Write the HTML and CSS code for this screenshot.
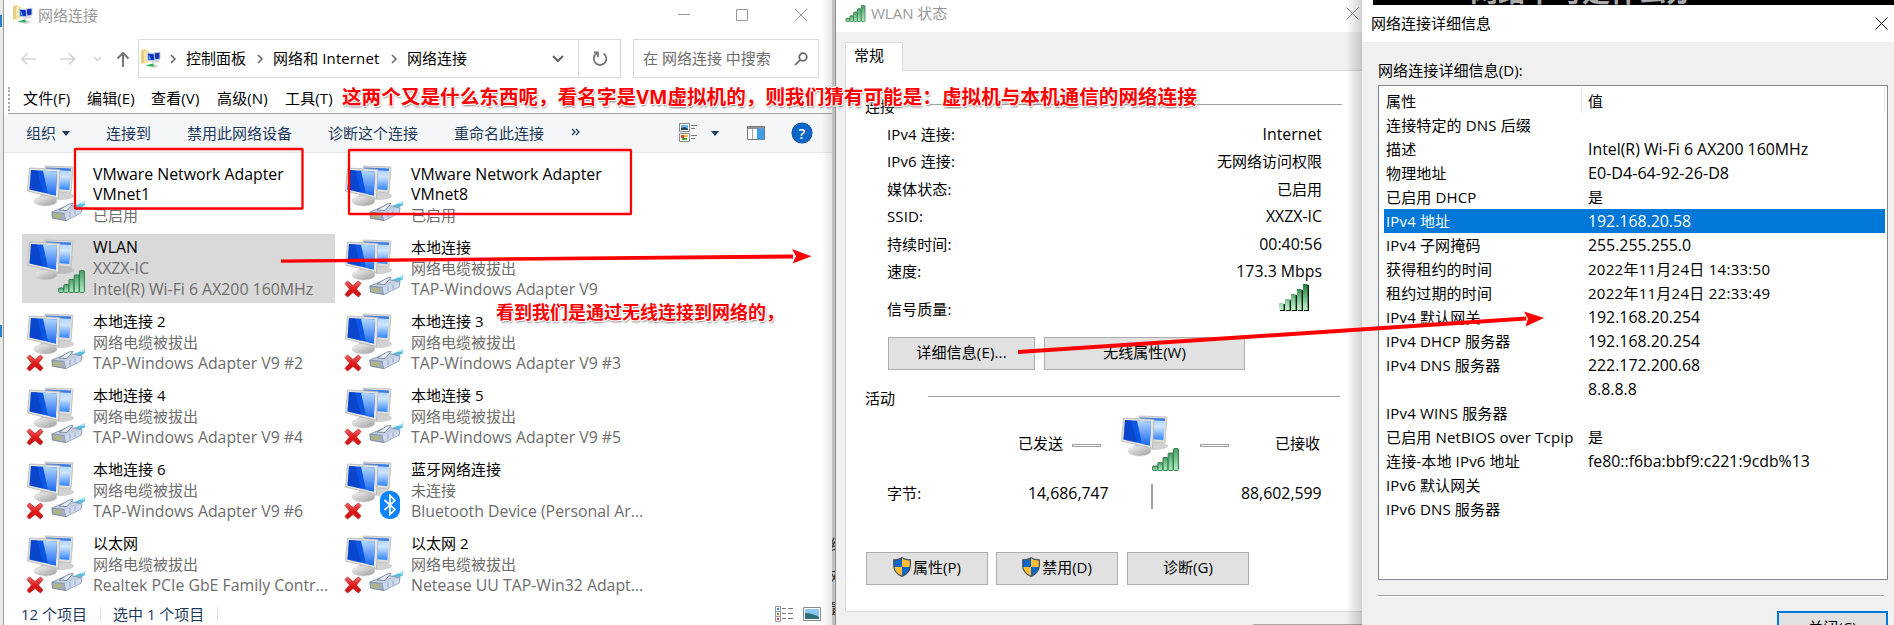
FILE: index.html
```html
<!DOCTYPE html>
<html lang="zh-CN">
<head>
<meta charset="utf-8">
<title>网络连接</title>
<link rel="stylesheet" href="styles.css">
</head>
<body>
<svg class="defs" width="0" height="0">
  <defs>
    <linearGradient id="g-back" x1="0" y1="0" x2="0" y2="1"><stop offset="0" stop-color="#a8d0ff"/><stop offset=".4" stop-color="#cfe6ff"/><stop offset="1" stop-color="#2c84ff"/></linearGradient>
    <linearGradient id="g-shine" x1="0" y1="0" x2="0" y2="1"><stop offset="0" stop-color="#b4d6ff"/><stop offset="1" stop-color="#1868f0"/></linearGradient>
    <linearGradient id="g-base" x1="0" y1="0" x2="1" y2="1"><stop offset="0" stop-color="#f6f6f6"/><stop offset="1" stop-color="#9a9a9a"/></linearGradient>
    <linearGradient id="g-bar" x1="0" y1="0" x2="0" y2="1"><stop offset="0" stop-color="#4d9e68"/><stop offset="1" stop-color="#b5ecc4"/></linearGradient>
    <linearGradient id="g-bar2" x1="0" y1="0" x2="0" y2="1"><stop offset="0" stop-color="#1c7838"/><stop offset="1" stop-color="#c4f5d0"/></linearGradient>
    <linearGradient id="g-x" x1="0" y1="0" x2="0" y2="1"><stop offset="0" stop-color="#f26a6a"/><stop offset=".5" stop-color="#dd1c1c"/><stop offset="1" stop-color="#c81010"/></linearGradient>
    <symbol id="pc" viewBox="0 0 50 50">
      <ellipse cx="33" cy="33" rx="14" ry="4" fill="#999" opacity=".45"/>
      <path d="M18 3 L46 4 L44 30 L22 28Z" fill="#dcdcd8" stroke="#bbb" stroke-width=".8"/>
      <path d="M19.500 5 L44 6 L42.300 27 L30 26Z" fill="url(#g-back)"/>
      <path d="M19 4.500 L44 5.500 L43.800 8 L19 6.500Z" fill="#3a7ae6"/>
      <path d="M11 35 Q14 33 16 30 L27 32 L29 36 Z" fill="#c6c6c6"/>
      <ellipse cx="18.500" cy="38" rx="11.500" ry="5" fill="url(#g-base)" stroke="#d0d0d0" stroke-width=".6"/>
      <path d="M2.500 5 L33 6.500 L31.500 35.500 L.5 28Z" fill="#e4e4e0" stroke="#b4b4b4" stroke-width=".8"/>
      <path d="M4 7 L30 8.500 L28.800 32.500 L2.500 26.500Z" fill="#0b56e4"/>
      <path d="M16 7.700 L30 8.500 L28.800 32.500 L21 30.700Z" fill="url(#g-shine)"/>
      <path d="M4 7 L10 7.300 L16 29.600 L2.500 26.500Z" fill="#0a36b4" opacity=".5"/>
    </symbol>
    <symbol id="plug" viewBox="0 0 36 22">
      <path d="M23 6 L34 1.500 L34 5 L28 9Z" fill="#5cbcdf"/>
      <path d="M27 4 L35 .8 L33 4Z" fill="#a5e4f4"/>
      <path d="M1 12 L13 7 L20 5.500 L31 8 L30 13 L15 20.500 L1.500 18Z" fill="#c3cde0" stroke="#8693ab" stroke-width=".9"/>
      <path d="M1 12 L13.500 13.500 L15 20.500 L1.500 18Z" fill="#a4afbc" stroke="#7c899a" stroke-width=".8"/>
      <path d="M13.500 13.500 L30 8.500 L29.500 13 L15 20Z" fill="#ccd9ee"/>
      <path d="M8 10 L18 4 L22 3.500 L16 10.500Z" fill="#e9eef6" stroke="#73829a" stroke-width=".9"/>
      <path d="M19 12v5.500M24 10.500v4.500" stroke="#8fa0bb" stroke-width=".9"/>
      <path d="M3.500 14v3M6 14.300v3.400M8.500 14.600v3.600" stroke="#bdb94e" stroke-width="1.400"/>
    </symbol>
    <symbol id="signal" viewBox="0 0 27 23">
      <g fill="url(#g-bar)" stroke="#2c7a48" stroke-width="1"><rect x=".6" y="18" width="5" height="4.400" rx="1"/><rect x="5.800" y="14.500" width="5" height="7.900" rx="1"/><rect x="11" y="9.500" width="5" height="12.900" rx="1"/><rect x="16.200" y="5" width="5" height="17.400" rx="1"/><rect x="21.400" y=".6" width="5" height="21.800" rx="1"/></g>
    </symbol>
    <symbol id="signal2" viewBox="0 0 32 27">
      <g fill="#0b1a0e"><path d="M2 20h5v7H2zM8 16h5v11H8zM14 11h5v16h-5zM20 6h5v21h-5zM26 1h5v26h-5z"/></g>
      <g fill="url(#g-bar2)"><path d="M1 19h4.600v7H1zM7 15h4.600v11H7zM13 10h4.600v16H13zM19 5h4.600v21H19zM25 0h4.600v26H25z"/></g>
    </symbol>
    <symbol id="redx" viewBox="0 0 18 18">
      <path d="M3.500 1 L9 5.500 L14.500 1 L17 3.500 L12.500 9 L17 14 L14.500 17 L9 12.500 L3.500 17 L1 14.500 L5.500 9 L1 3.500Z" fill="url(#g-x)" stroke="#c42a2a" stroke-width=".8" stroke-linejoin="round"/>
    </symbol>
    <symbol id="bt" viewBox="0 0 20 28">
      <rect width="20" height="28" rx="9" fill="#0a84ff"/>
      <path d="M4.500 9 L15 18.500 L10 23.500 V4.500 L15 9.500 L4.500 19" fill="none" stroke="#fff" stroke-width="1.700"/>
    </symbol>
    <symbol id="net" viewBox="0 0 20 20">
      <path d="M0 1 L5 0 V13 L0 15Z" fill="#e6cf86"/><path d="M3 2 L8 1 V13 L3 15Z" fill="#f7e6a4"/>
      <path d="M13 4 L19 3 V10 L14 11Z" fill="#1434b8" stroke="#c9d2dc" stroke-width="1"/>
      <path d="M6.500 4 L13.500 5 V12 L6.500 11Z" fill="#1233c8" stroke="#b4cbe6" stroke-width="1"/><path d="M7.500 5 L10 10.500 L7.500 10Z" fill="#63b4f5"/>
      <path d="M9 12 L18 10.500 L18 13 L12 14Z" fill="#d3d8dc"/>
      <path d="M5 17 L12 14.500 L18 17 L13 19Z" fill="#ccd3d6"/><path d="M4 16.500 L12 14.500 L13 17.500Z" fill="#26b44a"/>
    </symbol>
    <symbol id="shield" viewBox="0 0 18 20">
      <path d="M9 .7 Q12 2.800 17.300 3 V9 Q17 16 9 19.400 Q1 16 .7 9 V3 Q6 2.800 9 .7Z" fill="#0a67c8"/>
      <path d="M9 .7 Q12 2.800 17.300 3 V10 H9Z M9 10 V19.400 Q1.500 16 .7 10Z" fill="#ffbd33"/>
      <path d="M9 .7 Q12 2.800 17.300 3 V9 Q17 16 9 19.400 Q1 16 .7 9 V3 Q6 2.800 9 .7Z" fill="none" stroke="#4b5560" stroke-width="1.300"/>
    </symbol>
  </defs>
</svg>

<main class="desktop">
  <div class="backdrop-edge"><i></i><i></i></div>
  <div class="backdrop-gap"><span>络</span><span>戏</span><span>置</span></div>
  <div class="backdrop-black"><span>网络下可是什么办</span></div>

  <section class="win explorer">
    <header class="ex-title">
      <svg class="i20"><use href="#net"/></svg><span>网络连接</span>
      <svg class="ctl" width="130" height="14" viewBox="0 0 130 14"><path d="M0 6.500h12M58.500 1.500h11v11h-11zM117 1l12 12M129 1l-12 12" fill="none" stroke="#999"/></svg>
    </header>
    <div class="ex-nav">
      <svg class="arrows" width="116" height="20" viewBox="0 0 116 20"><g fill="none" stroke-width="1.700"><path d="M15 10H1M6.500 4.500L1 10l5.500 5.500M39 10h14M48 4.500l5.500 5.500-5.500 5.500M73 8l3.500 3.500L80 8" stroke="#d3d3d3"/><path d="M102 18V4M96.500 9.500L102 4l5.500 5.500" stroke="#777" stroke-width="2"/></g></svg>
      <div class="address">
        <svg class="i20"><use href="#net"/></svg>
        <svg class="chev"><path d="M1 1l4 4-4 4"/></svg><span>控制面板</span>
        <svg class="chev"><path d="M1 1l4 4-4 4"/></svg><span class="inet">网络和 Internet</span>
        <svg class="chev"><path d="M1 1l4 4-4 4"/></svg><span>网络连接</span>
        <svg class="drop" width="12" height="8" viewBox="0 0 12 8"><path d="M1 1l5 5 5-5"/></svg>
        <b class="refresh"><svg width="16" height="16" viewBox="0 0 16 16"><path d="M5 2.200A6.300 6.300 0 1 0 11.500 2.400M2 1.500h4v4.500" fill="none" stroke="#777" stroke-width="1.800"/></svg></b>
      </div>
      <div class="search"><span>在 网络连接 中搜索</span><svg width="14" height="14" viewBox="0 0 14 14"><circle cx="9" cy="5" r="3.800"/><path d="M6 8L1 13"/></svg></div>
    </div>
    <nav class="ex-menu"><span>文件(F)</span><span>编辑(E)</span><span>查看(V)</span><span>高级(N)</span><span>工具(T)</span></nav>
    <div class="ex-tools">
      <span class="t1">组织<i class="tri"></i></span><span class="t2">连接到</span><span class="t3">禁用此网络设备</span><span class="t4">诊断这个连接</span><span class="t5">重命名此连接</span>
      <svg class="more" width="9" height="8" viewBox="0 0 9 8"><path d="M1 1l3 3-3 3M5 1l3 3-3 3" fill="none" stroke="#1e395b" stroke-width="1.300"/></svg>
      <svg class="view" width="18" height="20" viewBox="0 0 18 20"><path d="M.5.5h10v8H.5zM.5 10.500h10v8H.5z" fill="#fff" stroke="#888"/><path d="M2 2h7v5H2z" fill="#6fb4e8"/><path d="M2 5l4-1 3 2v1H2z" fill="#245"/><path d="M2 12h3v3H2z" fill="#d43"/><path d="M5 12h4v2H5z" fill="#fb3"/><path d="M3 15h5v2H3z" fill="#4a3"/><path d="M12 2.500h6M12 5.500h4M12 12.500h6M12 15.500h4" stroke="#777"/></svg>
      <i class="tri"></i>
      <svg class="pane" width="18" height="15" viewBox="0 0 18 15"><path d="M.5.5h17v13H.5z" fill="#fff" stroke="#777"/><path d="M1 1h16v2H1z" fill="#8a949c"/><path d="M10 2.500h7v11h-7z" fill="#3f9ee8"/><path d="M5.500 3v10" stroke="#aaa"/></svg>
      <b class="help">?</b>
    </div>
    <div class="grid">
      <article class="item two"><div class="ico"><svg class="pc"><use href="#pc"/></svg><svg class="plug"><use href="#plug"/></svg></div><div><h4 class="la">VMware Network Adapter<br>VMnet1</h4><p>已启用</p></div></article>
      <article class="item two"><div class="ico"><svg class="pc"><use href="#pc"/></svg><svg class="plug"><use href="#plug"/></svg></div><div><h4 class="la">VMware Network Adapter<br>VMnet8</h4><p>已启用</p></div></article>
      <article class="item sel"><div class="ico"><svg class="pc"><use href="#pc"/></svg><svg class="sig"><use href="#signal"/></svg></div><div><h4 class="la">WLAN</h4><p class="la">XXZX-IC</p><p class="la">Intel(R) Wi-Fi 6 AX200 160MHz</p></div></article>
      <article class="item"><div class="ico"><svg class="pc"><use href="#pc"/></svg><svg class="plug"><use href="#plug"/></svg><svg class="x"><use href="#redx"/></svg></div><div><h4>本地连接</h4><p>网络电缆被拔出</p><p class="la">TAP-Windows Adapter V9</p></div></article>
      <article class="item"><div class="ico"><svg class="pc"><use href="#pc"/></svg><svg class="plug"><use href="#plug"/></svg><svg class="x"><use href="#redx"/></svg></div><div><h4>本地连接 2</h4><p>网络电缆被拔出</p><p class="la">TAP-Windows Adapter V9 #2</p></div></article>
      <article class="item"><div class="ico"><svg class="pc"><use href="#pc"/></svg><svg class="plug"><use href="#plug"/></svg><svg class="x"><use href="#redx"/></svg></div><div><h4>本地连接 3</h4><p>网络电缆被拔出</p><p class="la">TAP-Windows Adapter V9 #3</p></div></article>
      <article class="item"><div class="ico"><svg class="pc"><use href="#pc"/></svg><svg class="plug"><use href="#plug"/></svg><svg class="x"><use href="#redx"/></svg></div><div><h4>本地连接 4</h4><p>网络电缆被拔出</p><p class="la">TAP-Windows Adapter V9 #4</p></div></article>
      <article class="item"><div class="ico"><svg class="pc"><use href="#pc"/></svg><svg class="plug"><use href="#plug"/></svg><svg class="x"><use href="#redx"/></svg></div><div><h4>本地连接 5</h4><p>网络电缆被拔出</p><p class="la">TAP-Windows Adapter V9 #5</p></div></article>
      <article class="item"><div class="ico"><svg class="pc"><use href="#pc"/></svg><svg class="plug"><use href="#plug"/></svg><svg class="x"><use href="#redx"/></svg></div><div><h4>本地连接 6</h4><p>网络电缆被拔出</p><p class="la">TAP-Windows Adapter V9 #6</p></div></article>
      <article class="item"><div class="ico"><svg class="pc"><use href="#pc"/></svg><svg class="bt"><use href="#bt"/></svg><svg class="x"><use href="#redx"/></svg></div><div><h4>蓝牙网络连接</h4><p>未连接</p><p class="la">Bluetooth Device (Personal Ar...</p></div></article>
      <article class="item"><div class="ico"><svg class="pc"><use href="#pc"/></svg><svg class="plug"><use href="#plug"/></svg><svg class="x"><use href="#redx"/></svg></div><div><h4>以太网</h4><p>网络电缆被拔出</p><p class="la">Realtek PCIe GbE Family Contr...</p></div></article>
      <article class="item"><div class="ico"><svg class="pc"><use href="#pc"/></svg><svg class="plug"><use href="#plug"/></svg><svg class="x"><use href="#redx"/></svg></div><div><h4>以太网 2</h4><p>网络电缆被拔出</p><p class="la">Netease UU TAP-Win32 Adapt...</p></div></article>
    </div>
    <footer class="ex-status"><span class="s1">12 个项目</span><span class="s2">选中 1 个项目</span>
      <svg width="47" height="17" viewBox="0 0 47 17"><path d="M.5.500h5v15h-5zM.5 5.500h5M.5 10.500h5" fill="#fff" stroke="#999"/><path d="M2 2h2v2H2z" fill="#38c"/><path d="M2 7h2v2H2z" fill="#a83"/><path d="M2 12h2v2H2z" fill="#c33"/><path d="M7 2.500h4M13 2.500h5M7 7.500h4M13 7.500h5M7 12.500h4M13 12.500h5" stroke="#777"/><path d="M28.500 1.500h17v13h-17z" fill="#fff" stroke="#888"/><path d="M30 3h14v10H30z" fill="#8cc8f4"/><path d="M30 7q7 0 14 4v2H30z" fill="#2e6f74"/></svg>
    </footer>
  </section>

  <section class="win status">
    <header class="st-title"><svg width="21" height="17" class="st-sig"><use href="#signal"/></svg><span>WLAN 状态</span><svg class="close" width="13" height="13" viewBox="0 0 13 13"><path d="M.5.5l12 12M12.500.5l-12 12"/></svg></header>
    <div class="tab">常规</div>
    <div class="panel">
      <div class="group g1"><span>连接</span><hr></div>
      <dl class="facts">
        <dt>IPv4 连接:</dt><dd class="la">Internet</dd>
        <dt>IPv6 连接:</dt><dd>无网络访问权限</dd>
        <dt>媒体状态:</dt><dd>已启用</dd>
        <dt>SSID:</dt><dd class="la">XXZX-IC</dd>
        <dt>持续时间:</dt><dd class="la">00:40:56</dd>
        <dt>速度:</dt><dd class="la">173.3 Mbps</dd>
      </dl>
      <div class="quality"><span>信号质量:</span><svg width="32" height="27"><use href="#signal2"/></svg></div>
      <div class="btns b1"><button>详细信息(E)...</button><button>无线属性(W)</button></div>
      <div class="group g2"><span>活动</span><hr></div>
      <div class="activity"><span>已发送</span><i></i><div class="ico"><svg class="pc"><use href="#pc"/></svg><svg class="sig"><use href="#signal"/></svg></div><i></i><span>已接收</span></div>
      <div class="bytes"><span>字节:</span><span class="la">14,686,747</span><i></i><span class="la">88,602,599</span></div>
      <div class="btns b2"><button><svg width="18" height="20"><use href="#shield"/></svg>属性(P)</button><button><svg width="18" height="20"><use href="#shield"/></svg>禁用(D)</button><button>诊断(G)</button></div>
    </div>
    <div class="st-foot"></div>
  </section>

  <section class="win details">
    <header class="dt-title"><span>网络连接详细信息</span><svg class="close" width="13" height="13" viewBox="0 0 13 13"><path d="M.5.5l12 12M12.500.5l-12 12"/></svg></header>
    <div class="dt-label">网络连接详细信息(D):</div>
    <div class="table">
      <div class="tr th"><span>属性</span><span>值</span></div>
      <div class="tr"><span>连接特定的 DNS 后缀</span><span></span></div>
      <div class="tr"><span>描述</span><span class="la">Intel(R) Wi-Fi 6 AX200 160MHz</span></div>
      <div class="tr"><span>物理地址</span><span class="la mac">E0-D4-64-92-26-D8</span></div>
      <div class="tr"><span>已启用 DHCP</span><span>是</span></div>
      <div class="tr on"><span>IPv4 地址</span><span class="la">192.168.20.58</span></div>
      <div class="tr"><span>IPv4 子网掩码</span><span class="la">255.255.255.0</span></div>
      <div class="tr"><span>获得租约的时间</span><span class="date">2022年11月24日 14:33:50</span></div>
      <div class="tr"><span>租约过期的时间</span><span class="date">2022年11月24日 22:33:49</span></div>
      <div class="tr"><span>IPv4 默认网关</span><span class="la">192.168.20.254</span></div>
      <div class="tr"><span>IPv4 DHCP 服务器</span><span class="la">192.168.20.254</span></div>
      <div class="tr"><span>IPv4 DNS 服务器</span><span class="la">222.172.200.68</span></div>
      <div class="tr"><span></span><span class="la">8.8.8.8</span></div>
      <div class="tr"><span>IPv4 WINS 服务器</span><span></span></div>
      <div class="tr"><span>已启用 NetBIOS over Tcpip</span><span>是</span></div>
      <div class="tr"><span>连接-本地 IPv6 地址</span><span class="la">fe80::f6ba:bbf9:c221:9cdb%13</span></div>
      <div class="tr"><span>IPv6 默认网关</span><span></span></div>
      <div class="tr"><span>IPv6 DNS 服务器</span><span></span></div>
    </div>
    <hr class="dt-rule">
    <button class="dt-close">关闭(C)</button>
  </section>

  <svg class="marks" width="1894" height="625" viewBox="0 0 1894 625">
    <g fill="none" stroke="#f00" stroke-width="2.300"><rect x="75" y="149" width="227.500" height="59.500" rx=".5"/><rect x="349" y="150" width="282" height="64" rx=".5"/></g>
    <g fill="#f00"><path d="M281 259.500 L793 254.500 V258.500 L281 262.700Z"/><path d="M792 249 L811.500 256.300 L792.500 263.500 L796 256.300Z"/>
    <path d="M1018 350 L1526 316.500 L1526.500 320.500 L1018 354Z"/><path d="M1524 311.500 L1544 318 L1525.500 326.500 L1528 318.700Z"/></g>
  </svg>
  <p class="note n1">这两个又是什么东西呢，看名字是VM虚拟机的，则我们猜有可能是：虚拟机与本机通信的网络连接</p>
  <p class="note n2">看到我们是通过无线连接到网络的，</p>
</main>
</body>
</html>
```
FILE: styles.css
```css
* { box-sizing: border-box; }
body { margin: 0; font: 15px/20px "Open Sans", "Noto Sans CJK SC", sans-serif; color: #000; }
svg { display: block; flex: none; }
h4, p, dl, dd { margin: 0; font-weight: 400; }
span, h4, p, button, dt, dd { white-space: nowrap; }
hr { margin: 0; border: 0; }
.defs { position: absolute; }
.la, .item .la { font-size: 15.85px; }
.tr .mac { font-size: 16.1px; }
.date { letter-spacing: .27px; }
.desktop { position: relative; width: 1894px; height: 625px; overflow: hidden; background: #fff; }
.win { position: absolute; overflow: hidden; }

.backdrop-edge { position: absolute; left: 0; top: 0; width: 4px; height: 625px; background: #e9e9e8; }
.backdrop-edge i { display: block; width: 2px; height: 12px; margin-top: 15px; background: #2a82c4; }
.backdrop-edge i + i { margin-top: 298px; }
.backdrop-gap { position: absolute; left: 831px; top: 0; width: 5px; height: 625px; background: #c2c2c2; border-left: 1px solid #8d8f90; overflow: hidden; padding-top: 528px; line-height: 32px; border-right: 1px solid #8c8c8c; }
.backdrop-gap span { display: block; margin-left: -2px; color: #333; }
.backdrop-black { position: absolute; left: 1373px; top: 0; width: 521px; height: 5px; background: #000; color: #aaa; overflow: hidden; padding-left: 97px; }
.backdrop-black span { display: block; margin-top: -25px; font-size: 28px; line-height: 32px; font-weight: 700; }

/* Explorer */
.explorer { left: 3px; top: 0; width: 829px; height: 625px; background: #fff; border-left: 1px solid #9a9a9a; display: flex; flex-direction: column; }
.explorer::after { content: ""; position: absolute; right: 0; top: 0; width: 10px; height: 625px; background: linear-gradient(90deg, transparent, rgba(0,0,0,.1)); }
.i20 { width: 20px; height: 20px; }
.ex-title { display: flex; align-items: center; height: 39px; padding: 0 8px 9px 9px; color: #999; gap: 5px; }
.ctl { margin: 0 16px 0 auto; }
.ex-nav { display: flex; height: 39px; }
.arrows { margin: 10px 0 0 16px; width: 118px; }
.address { width: 483px; border: 1px solid #d9d9d9; display: flex; align-items: center; padding-left: 2px; }
.address > span, .search > span { margin-top: -1px; }
.chev { width: 7px; height: 10px; margin: 0 9px 0 11px; }
.address .i20 + .chev { margin-left: 9px; }
.inet { width: 107px; letter-spacing: .1px; }
.chev path, .drop path { fill: none; stroke: #666; stroke-width: 1.5; }
.drop { margin-left: auto; margin-right: 14px; }
.drop path { stroke-width: 2; }
.refresh { width: 42px; height: 37px; border-left: 1px solid #d9d9d9; display: grid; place-items: center; }
.search { width: 186px; margin-left: 12px; border: 1px solid #d9d9d9; display: flex; align-items: center; justify-content: space-between; padding: 0 10px 0 9px; color: #6d6d6d; }
.search svg { fill: none; stroke: #666; stroke-width: 1.7; }
.ex-menu { display: flex; height: 36px; padding: 10px 0 0 15px; margin-left: 4px; position: relative; border-bottom: 1px solid #a0a0a0; }
.ex-menu::before { content: ""; position: absolute; left: 0; top: 9px; height: 24px; border-left: 2px dotted #aaa; }
.ex-menu span { width: 64px; letter-spacing: .15px; }
.ex-menu span:nth-child(3) { width: 66px; }
.ex-menu span:nth-child(4) { width: 68px; }
.ex-tools { display: flex; align-items: center; height: 39px; background: #f4f6f8; border-bottom: 1px solid #e4e8ec; color: #1e395b; padding-left: 22px; }
.tri { display: inline-block; border: 4px solid transparent; border-top: 5px solid #1e395b; border-bottom: 0; vertical-align: middle; }
.t1 .tri { margin-left: 6px; margin-top: -2px; }
.t1 { width: 80px; } .t2 { width: 81px; } .t3 { width: 141px; } .t4 { width: 126px; } .t5 { width: 117px; }
.more { margin-top: -2px; }
.view { margin: 0 14px 0 99px; }
.pane { margin: 0 27px 0 28px; }
.help { width: 20px; height: 20px; border-radius: 50%; background: #0a66c6; box-shadow: 0 0 0 .5px #174f86; color: #fff; text-align: center; font-weight: 600; line-height: 20px; }
.grid { display: grid; grid-template-columns: 313px 313px; column-gap: 5px; grid-auto-rows: 69px; row-gap: 5px; padding: 7px 0 0 18px; }
.item { display: flex; position: relative; }
.item.sel { background: #d9d9d9; }
.ico { width: 71px; position: relative; flex: none; }
.ico svg { position: absolute; }
.ico .pc { left: 5px; top: 3px; width: 50px; height: 50px; }
.ico .plug { left: 29px; top: 40px; width: 36px; height: 22px; }
.ico .sig { left: 36px; top: 36px; width: 27px; height: 23px; }
.ico .x { left: 4px; top: 46px; width: 18px; height: 18px; }
.ico .bt { left: 40px; top: 35px; width: 20px; height: 28px; }
.item h4, .item p { line-height: 21px; }
.item h4 { margin-top: 3px; }
.item p { color: #6d6d6d; }
.two h4.la { line-height: 20px; margin-top: 4px; margin-bottom: 1px; }
.ex-status { display: flex; align-items: center; height: 20px; margin-top: 5px; color: #1e395b; padding-left: 17px; }
.s1 { width: 80px; border-right: 1px solid #e2e2e2; line-height: 14px; }
.s2 { width: 117px; padding-left: 12px; border-right: 1px solid #e2e2e2; line-height: 14px; }
.ex-status svg { margin: 0 0 0 557px; }

/* Status dialog */
.status { left: 836px; top: 0; width: 526px; height: 625px; background: #f0f0f0; display: flex; flex-direction: column; }
.status::after { content: ""; position: absolute; right: 0; top: 0; width: 16px; height: 625px; background: linear-gradient(90deg, transparent, rgba(0,0,0,.18)); }
.st-title { display: flex; height: 32px; background: #fff; padding: 3px 3px 0 9px; color: #999; gap: 5px; }
.st-sig { margin-top: 2px; }
.close { margin: 4px 0 0 auto; fill: none; stroke: #888; }
.tab { margin: 10px 0 -1px 9px; width: 58px; height: 29px; background: #fff; border: 1px solid #dcdcdc; border-bottom: 0; padding: 2px 0 0 8px; position: relative; }
.panel { margin-left: 9px; height: 542px; background: #fff; border: 1px solid #dcdcdc; border-right: 0; }
.group { display: flex; margin-left: 19px; }
.group hr { height: 1px; background: #a0a0a0; width: 412px; margin-left: auto; margin-right: 20px; }
.g1 { padding-top: 25px; } .g1 hr { margin-top: 8px; }
.facts { display: grid; grid-template-columns: auto auto; grid-auto-rows: 27.4px; padding: 8px 40px 0 41px; }
.facts dt, .quality span, .bytes span:first-child { letter-spacing: .1px; }
.facts dd { text-align: right; }
.quality { display: flex; justify-content: space-between; height: 48.6px; padding: 10.6px 52px 0 41px; }
.quality svg { margin-top: -15px; }
.btns { display: flex; }
.btns button { height: 33px; border: 1px solid #adadad; background: #e1e1e1; font: inherit; padding: 0 0 2px; display: flex; align-items: center; justify-content: center; }
.b1 { gap: 9px; margin-left: 42px; }
.b1 button { width: 147px; } .b1 button + button { width: 201px; }
.b1 button:first-child { letter-spacing: .15px; }
.g2 { margin-top: 18px; } .g2 hr { margin: 8px 22px 0 auto; }
.activity { display: flex; padding: 16px 0 0 172px; height: 76px; }
.activity span { margin-top: 9px; width: 54px; }
.activity i { width: 29px; height: 3px; border: 1px solid #a0a0a0; margin-top: 20px; }
.activity .ico { width: 99px; height: 60px; }
.activity .pc { left: 20px; top: -11px; }
.activity .sig { left: 51px; top: 24px; }
.activity i + span { margin-left: 46px; }
.bytes { display: flex; margin: 0 0 0 41px; height: 68px; }
.bytes span { margin-top: -1px; }
.bytes span:first-child { width: 32px; }
.bytes span:nth-child(2) { margin-left: 109px; width: 79px; }
.bytes i { width: 2px; height: 25px; background: #a0a0a0; margin: 0 88px 0 44px; }
.b2 { gap: 8px; margin-left: 20px; } .b2 button { width: 122px; gap: 2px; }
.b2 button:last-child { margin-left: 1px; }
.st-foot { margin: 12px 0 0 417px; height: 1px; background: #a8a8a8; }

/* Details dialog */
.details { left: 1362px; top: 5px; width: 532px; height: 620px; background: #f0f0f0; }
.dt-title { height: 37px; background: #fff; display: flex; padding: 8px 6px 0 9px; }
.dt-title .close { stroke: #000; }
.dt-label { padding: 18px 0 0 16px; letter-spacing: .1px; }
.table { margin: 5px 0 0 16px; width: 510px; height: 495px; border: 1px solid #828790; background: #fff; padding: 1px 2px 0 5px; }
.tr { display: grid; grid-template-columns: 202px auto; height: 24px; line-height: 24px; padding-left: 2px; }
.tr > span:first-child { letter-spacing: .15px; }
.th { height: 26px; line-height: 28px; background: linear-gradient(#e4e4e4,#e4e4e4) 197px 0 / 1px 26px no-repeat; border-right: 1px solid #e4e4e4; }
.tr.on { background: #0078d7; color: #fff; }
.dt-rule { margin: 15px 10px 0 16px; height: 2px; background: #a0a0a0; border-bottom: 1px solid #fff; }
.dt-close { display: block; margin: 14px 0 0 415px; width: 111px; height: 33px; border: 2px solid #0078d7; background: #e1e1e1; font: inherit; padding: 0 0 2px; }

/* Annotations */
.marks { position: absolute; left: 0; top: 0; }
.note { position: absolute; color: #f00; font-weight: 700; text-shadow: 1px 0 #fff, -1px 0 #fff, 0 1px #fff, 0 -1px #fff, 1px 1px #fff, -1px -1px #fff, 1px 2px 2px #777; }
.n1 { left: 342px; top: 82px; font-size: 19.62px; line-height: 30px; }
.n2 { left: 496px; top: 298px; font-size: 18px; line-height: 28px; }
```
